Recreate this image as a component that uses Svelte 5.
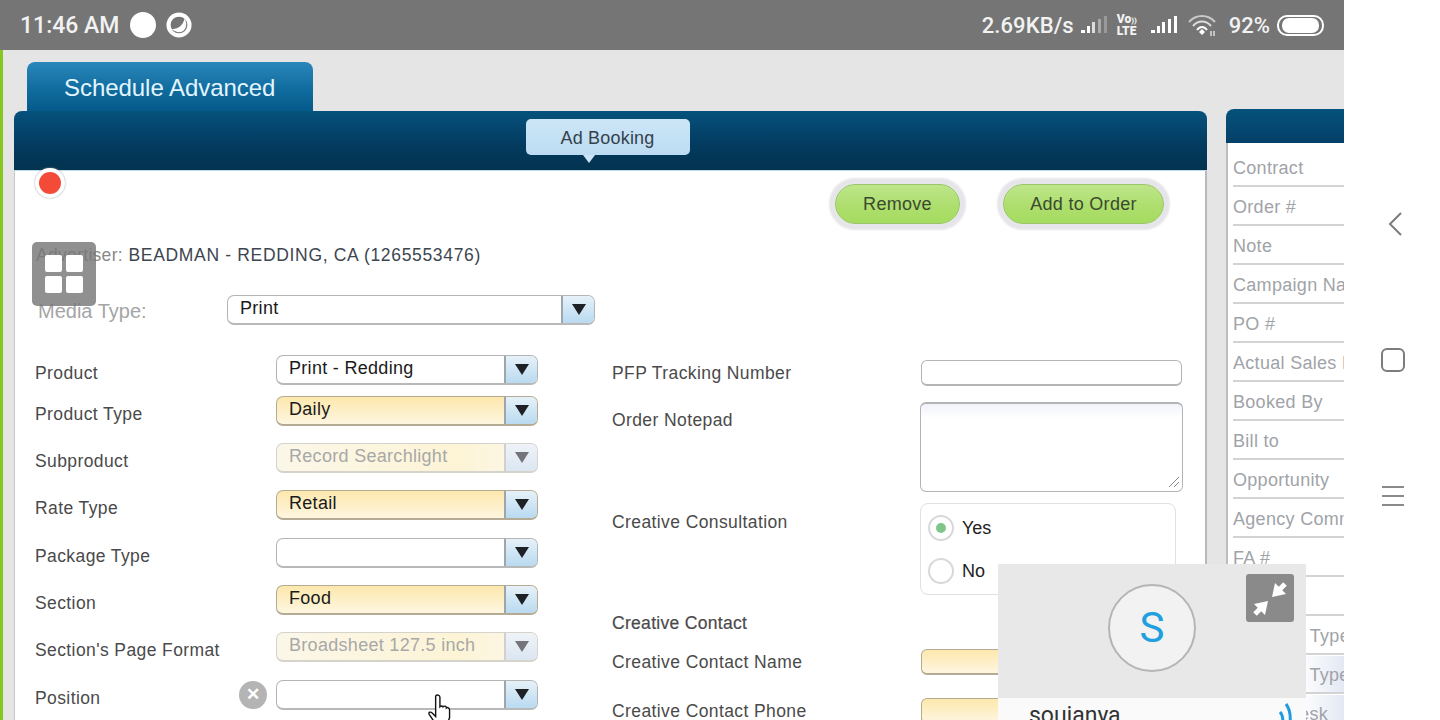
<script lang="ts">
    const products = [
        { label: "Product", value: "Print - Redding", kind: "plain", gap: 11 },
        { label: "Product Type", value: "Daily", kind: "req", gap: 17 },
        { label: "Subproduct", value: "Record Searchlight", kind: "off", gap: 17 },
        { label: "Rate Type", value: "Retail", kind: "req", gap: 18 },
        { label: "Package Type", value: "", kind: "plain", gap: 17 },
        { label: "Section", value: "Food", kind: "req", gap: 17 },
        { label: "Section's Page Format", value: "Broadsheet 127.5 inch", kind: "off", gap: 18 },
        { label: "Position", value: "", kind: "plain", gap: 0, clear: true }
    ];

    const summary = ["Contract", "Order #", "Note", "Campaign Name", "PO #", "Actual Sales Rep", "Booked By", "Bill to", "Opportunity", "Agency Commission", "FA #", "", "Insertion Type", "Override Type", "Order Desk"];
</script>

<div class="device">
    <div class="screen">
        <div class="status">
            <div class="status-left">
                <span>11:46 AM</span>
                <i class="dot"></i>
                <svg width="26" height="26" viewBox="0 0 28 28">
                    <circle cx="14" cy="14" r="13.500" fill="#fff" />
                    <circle cx="14" cy="14" r="9" fill="#757575" />
                    <path d="M6 18c5 1 12-2 14-11 3 5 2 10-1 13-3 3-9 2-13-2z" fill="#fff" />
                </svg>
            </div>
            <div class="status-right">
                <span class="speed">2.69KB/s</span>
                <svg width="28" height="20" viewBox="0 0 28 20" class="bars">
                    <rect x="1" y="15" width="4" height="3" fill="#fff" /><rect x="7" y="11" width="3" height="7" fill="#fff" /><rect x="12" y="7" width="3" height="11" fill="#ddd" /><rect x="18" y="4" width="3" height="14" fill="#aaa" /><rect x="24" y="1" width="3" height="17" fill="#999" />
                </svg>
                <div class="volte"><b>Vo<small>))</small></b><b>LTE</b></div>
                <svg width="28" height="20" viewBox="0 0 28 20" class="bars">
                    <rect x="1" y="15" width="4" height="3" fill="#fff" /><rect x="7" y="11" width="3" height="7" fill="#fff" /><rect x="12" y="7" width="3" height="11" fill="#fff" /><rect x="18" y="4" width="3" height="14" fill="#fff" /><rect x="24" y="1" width="3" height="17" fill="#fff" />
                </svg>
                <svg width="30" height="24" viewBox="0 0 30 24" class="wifi">
                    <path d="M2 9C9 1 21 1 28 9" fill="none" stroke="#c8c8c8" stroke-width="2" />
                    <path d="M6 13C11 7 19 7 24 13" fill="none" stroke="#ddd" stroke-width="2" />
                    <path d="M10 17C13 13 17 13 20 17" fill="none" stroke="#fff" stroke-width="2" />
                    <path d="M12 19l3-3 3 3-3 3z" fill="#fff" />
                    <path d="M24 18v5M27 18v5" stroke="#ddd" stroke-width="1.500" />
                </svg>
                <span>92%</span>
                <div class="battery"><i></i></div>
            </div>
        </div>

        <div class="page">
            <div class="tab">Schedule Advanced</div>
            <div class="columns">
                <section class="panel">
                    <header class="panel-head">
                        <div class="pill">Ad Booking</div>
                    </header>
                    <div class="panel-body">
                        <div class="actions">
                            <button class="green remove">Remove</button>
                            <button class="green add">Add to Order</button>
                        </div>
                        <p class="advertiser"><span>Advertiser:</span> BEADMAN - REDDING, CA (1265553476)</p>
                        <div class="media">
                            <span class="media-label">Media Type:</span>
                            <div class="select media-select">
                                <span class="val">Print</span>
                                <span class="arrow"><i></i></span>
                            </div>
                        </div>
                        <div class="form">
                            <div class="left">
                                {#each products as p}
                                    <div class="row" style="margin-bottom:{p.gap}px">
                                        <span class="lbl">{p.label}</span>
                                        {#if p.clear}
                                            <span class="clear">✕</span>
                                        {/if}
                                        <div class="select {p.kind}">
                                            <span class="val">{p.value}</span>
                                            <span class="arrow"><i></i></span>
                                        </div>
                                    </div>
                                {/each}
                            </div>
                            <div class="right">
                                <div class="rrow first">
                                    <span class="lbl">PFP Tracking Number</span>
                                    <div class="input"></div>
                                </div>
                                <div class="rrow notes">
                                    <span class="lbl">Order Notepad</span>
                                    <div class="textarea">
                                        <svg width="12" height="12" viewBox="0 0 12 12">
                                            <path d="M11 1L1 11M11 6L6 11" stroke="#888" fill="none" />
                                        </svg>
                                    </div>
                                </div>
                                <div class="rrow radios">
                                    <span class="lbl">Creative Consultation</span>
                                    <div class="radio-box">
                                        <div class="radio-line"><i class="radio on"></i>Yes</div>
                                        <div class="radio-line"><i class="radio"></i>No</div>
                                    </div>
                                </div>
                                <div class="contact-title">Creative Contact</div>
                                <div class="rrow contact">
                                    <span class="lbl">Creative Contact Name</span>
                                    <div class="input req"></div>
                                </div>
                                <div class="rrow contact">
                                    <span class="lbl">Creative Contact Phone</span>
                                    <div class="input req"></div>
                                </div>
                            </div>
                        </div>
                    </div>
                </section>
                <aside class="side">
                    <div class="side-head"></div>
                    <ul>
                        {#each summary as s}
                            <li>{s}</li>
                        {/each}
                    </ul>
                </aside>
            </div>

            <i class="rec"></i>
            <div class="float-grid"><i></i><i></i><i></i><i></i></div>
            <svg class="hand" width="28" height="30" viewBox="0 0 26 28">
                <path d="M8 2c1-1.500 4-1.500 4 1v9c1-1 3-1 3 0 1-1 3-1 3 1 1-1 3 0 3 2v7l-2 6H8l-6-9c-1-2 1-3 3-1l3 3V3z" fill="#fff" stroke="#111" stroke-width="1.300" />
            </svg>
            <div class="call">
                <div class="call-top">
                    <div class="avatar">S</div>
                    <div class="shrink">
                        <svg width="48" height="48" viewBox="0 0 48 48">
                            <path d="M26 23l3-14 11 11z" fill="#fff" />
                            <path d="M33 16l6-6" stroke="#fff" stroke-width="5" />
                            <path d="M22 27L8 30l11 11z" fill="#fff" />
                            <path d="M15 34l-6 6" stroke="#fff" stroke-width="5" />
                        </svg>
                    </div>
                </div>
                <div class="call-bottom">
                    <span>soujanya</span>
                    <svg width="16" height="20" viewBox="0 0 16 20">
                        <path d="M2 9c2 2 3 5 3 11M8 1c3 4 5 10 4 19" fill="none" stroke="#1f9ce0" stroke-width="3" />
                    </svg>
                </div>
            </div>
        </div>
    </div>
    <nav class="softkeys">
        <svg class="back" width="14" height="24" viewBox="0 0 14 24">
            <path d="M13 1L2 12l11 11" fill="none" stroke="#7d7d7d" stroke-width="2" />
        </svg>
        <i class="square"></i>
        <div class="menu"><i></i><i></i><i></i></div>
    </nav>
</div>

<style>
    :global(body) {
        margin: 0;
        background: #fff;
    }

    .device {
        display: flex;
        width: 1440px;
        height: 720px;
        overflow: hidden;
        font-family: "Liberation Sans", Arial, sans-serif;
        font-size: 17px;
        color: #333;
    }

    .screen {
        width: 1344px;
        height: 720px;
        display: flex;
        flex-direction: column;
        flex: none;
    }

    .status {
        height: 50px;
        flex: none;
        background: #757575;
        color: #f2f2f2;
        display: flex;
        justify-content: space-between;
        align-items: center;
        padding: 0 20px;
        box-sizing: border-box;
        font-family: Roboto, sans-serif;
        font-size: 22px;
        font-weight: 500;
    }

    .status-left, .status-right {
        display: flex;
        align-items: center;
    }

    .status-left span {
        font-size: 23px;
        margin-right: 11px;
        padding-top: 1px;
    }

    .dot {
        width: 26px;
        height: 26px;
        border-radius: 50%;
        background: #fff;
        margin-right: 10px;
    }

    .speed {
        margin-right: 6px;
        letter-spacing: 0.1px;
    }

    .bars {
        margin-right: 9px;
    }

    .volte {
        display: flex;
        flex-direction: column;
        font-size: 12px;
        line-height: 11px;
        width: 24px;
        margin-right: 9px;
        font-weight: 700;
    }

    .volte small {
        font-size: 8px;
    }

    .wifi {
        margin-right: 12px;
    }

    .battery {
        width: 47px;
        height: 21px;
        border: 2px solid #fff;
        border-radius: 10px;
        margin-left: 7px;
        padding: 1px;
        box-sizing: border-box;
    }

    .battery i {
        display: block;
        height: 100%;
        background: #fff;
        border-radius: 7px;
        width: 92%;
        margin: 0 auto;
    }

    .page {
        position: relative;
        flex: 1;
        min-height: 0;
        overflow: hidden;
        background: #e6e5e6;
        border-left: 3px solid #86c820;
        padding: 12px 0 0 11px;
        box-sizing: border-box;
    }

    .tab {
        margin-left: 13px;
        width: 286px;
        height: 49px;
        box-sizing: border-box;
        padding: 12px 0 0 37px;
        border-radius: 8px 8px 0 0;
        background: linear-gradient(180deg, #2a87bb 0%, #0f6a9c 60%, #045a8a 100%);
        color: #e2f5ff;
        font-size: 24px;
        letter-spacing: -0.05px;
        line-height: 28px;
    }

    .columns {
        display: flex;
        gap: 19px;
        align-items: flex-start;
    }

    .panel {
        width: 1193px;
        flex: none;
        background: #fff;
        border-right: 2px solid #b9b9bb;
        border-left: 1px solid #c8c8c8;
        box-sizing: border-box;
        border-radius: 8px 8px 0 0;
    }

    .panel-head {
        height: 59px;
        margin: 0 -2px 0 -1px;
        border-radius: 8px 8px 0 0;
        background: linear-gradient(180deg, #05527d 0%, #033a5e 60%, #03334f 100%);
        display: flex;
        justify-content: center;
        border-bottom: 1px solid #bcdcee;
    }

    .pill {
        margin-top: 8px;
        width: 164px;
        height: 36px;
        border-radius: 5px;
        background: linear-gradient(180deg, #cde6f7, #bcdcf3);
        color: #34424c;
        font-size: 18px;
        letter-spacing: 0.2px;
        line-height: 39px;
        text-align: center;
        position: relative;
        left: -3px;
    }

    .pill::after {
        content: "";
        position: absolute;
        left: 57px;
        bottom: -8px;
        border: 6px solid transparent;
        border-bottom-width: 0;
        border-top: 8px solid #cbe4f6;
    }

    .panel-body {
        padding: 6px 0 0 20px;
    }

    .actions {
        display: flex;
        justify-content: flex-end;
        gap: 43px;
        padding-right: 41px;
        height: 54px;
        align-items: center;
    }

    .green {
        height: 40px;
        border-radius: 20px;
        border: 1px solid #9cc46c;
        background: linear-gradient(180deg, #bde68a 0%, #aede6e 55%, #a5dc60 100%);
        box-shadow: 0 0 2px 6px #e6e6ea;
        color: #3a4a2e;
        font: 18px "Liberation Sans", Arial, sans-serif;
        letter-spacing: 0.3px;
        padding: 0;
    }

    .remove {
        width: 125px;
    }

    .add {
        width: 161px;
    }

    .advertiser {
        margin: 14px 0 0 1px;
        line-height: 20px;
        font-size: 17.500px;
        color: #3d4650;
        letter-spacing: 0.67px;
    }

    .advertiser span {
        color: #8a8a8a;
        letter-spacing: 0.3px;
    }

    .media {
        display: flex;
        align-items: center;
        margin-top: 30px;
    }

    .media-label {
        width: 192px;
        padding-left: 3px;
        box-sizing: border-box;
        color: #a5a5a5;
        font-size: 20px;
        padding-top: 2px;
    }

    .select {
        height: 30px;
        width: 262px;
        box-sizing: border-box;
        border: 1px solid #b4b4b4;
        border-bottom: 2px solid #b8b8b8;
        border-radius: 7px;
        background: #fff;
        display: flex;
        justify-content: space-between;
        overflow: hidden;
        flex: none;
    }

    .media-select {
        width: 368px;
    }

    .select .val {
        padding-left: 12px;
        color: #1a1a1a;
        font-size: 18px;
        letter-spacing: 0.3px;
        line-height: 24px;
    }

    .arrow {
        width: 31px;
        border-left: 2px solid #9ca6ac;
        background: linear-gradient(180deg, #e6f1f9, #b9daf0);
        display: flex;
        align-items: center;
        justify-content: center;
    }

    .arrow i {
        border: 6px solid transparent;
        border-bottom-width: 0;
        border-top: 11px solid #1d2125;
        border-left-width: 7px;
        border-right-width: 7px;
    }

    .select.req, .input.req {
        background: linear-gradient(180deg, #fde8ad 0%, #fdf0cb 60%, #fef6e0 100%);
        border-color: #b5ab95;
    }

    .select.off {
        background: linear-gradient(90deg, #fbf7e8, #fdf4d6 70%, #fbf8ec);
        border-color: #d6d3cc;
    }

    .select.off .val {
        color: #a8a8a8;
    }

    .select.off .arrow {
        border-left-color: #d0d0d0;
        background: linear-gradient(180deg, #eff3f8, #dbe6f2);
    }

    .select.off .arrow i {
        border-top-color: #74747c;
    }

    .form {
        display: flex;
        margin-top: 30px;
    }

    .left {
        width: 577px;
        flex: none;
    }

    .row {
        display: flex;
        align-items: center;
        height: 30px;
        position: relative;
    }

    .lbl {
        color: #4a4a4a;
        font-size: 17.500px;
        letter-spacing: 0.4px;
        padding-top: 6px;
        white-space: nowrap;
    }

    .row .lbl {
        width: 241px;
        flex: none;
    }

    .clear {
        position: absolute;
        left: 204px;
        top: 1px;
        width: 28px;
        height: 28px;
        border-radius: 50%;
        background: #b4b4b4;
        color: #fff;
        font-size: 17px;
        font-weight: 700;
        line-height: 28px;
        text-align: center;
    }

    .rrow {
        display: flex;
    }

    .rrow .lbl {
        width: 309px;
        flex: none;
    }

    .first {
        align-items: center;
        height: 30px;
    }

    .first .input {
        margin-top: 6px;
    }

    .input {
        width: 261px;
        height: 26px;
        box-sizing: border-box;
        border: 1px solid #b4b4b4;
        border-bottom-width: 2px;
        border-radius: 6px;
        background: #fff;
    }

    .notes {
        margin-top: 17px;
    }

    .notes .lbl {
        padding-top: 8px;
        width: 308px;
    }

    .textarea {
        width: 263px;
        height: 90px;
        box-sizing: border-box;
        border: 1px solid #b4b4b4;
        border-top-width: 2px;
        border-radius: 6px;
        background: linear-gradient(180deg, #f1f3fa 0, #fff 14px);
        display: flex;
        justify-content: flex-end;
        align-items: flex-end;
        padding: 0 2px 3px 0;
    }

    .radios {
        margin-top: 11px;
    }

    .radios .lbl {
        padding-top: 0;
        margin-top: 9px;
        width: 308px;
    }

    .radio-box {
        width: 256px;
        height: 92px;
        box-sizing: border-box;
        border: 1px solid #e2e0e2;
        border-radius: 8px;
        padding: 10px 0 0 7px;
    }

    .radio-line {
        display: flex;
        align-items: center;
        gap: 8px;
        height: 28px;
        margin-bottom: 15px;
        font-size: 18px;
        color: #222;
    }

    .radio {
        width: 26px;
        height: 26px;
        border: 2px solid #d8d8d8;
        border-radius: 50%;
        box-sizing: border-box;
        display: flex;
        align-items: center;
        justify-content: center;
    }

    .radio.on::after {
        content: "";
        width: 10px;
        height: 10px;
        border-radius: 50%;
        background: #7fc58a;
    }

    .contact-title {
        margin-top: 17px;
        font-size: 17.500px;
        -webkit-text-stroke: 0.2px #4a4a4a;
        color: #4a4a4a;
        letter-spacing: 0.3px;
        line-height: 22px;
    }

    .contact {
        margin-top: 15px;
        align-items: center;
        height: 26px;
    }

    .contact + .contact {
        margin-top: 23px;
    }

    .contact .lbl {
        padding-top: 0;
    }

    .side {
        flex: 1;
        min-width: 0;
        margin-top: -2px;
        border-radius: 8px 0 0 0;
        overflow: hidden;
    }

    .side-head {
        height: 34px;
        background: linear-gradient(180deg, #05527d, #043f66);
    }

    .side ul {
        list-style: none;
        margin: 0;
        padding: 6px 0 0 5px;
        background: #fff;
        border-left: 2px solid #bcbcbe;
    }

    .side li {
        height: 38px;
        margin-bottom: 1px;
        box-sizing: border-box;
        border-bottom: 2px solid #d3d3d5;
        color: #a0a3a8;
        font-size: 18px;
        letter-spacing: 0.3px;
        line-height: 38px;
        white-space: nowrap;
        overflow: hidden;
    }

    .side li:nth-last-child(-n+2) {
        background: linear-gradient(90deg, #fff 60%, #e3e8f3);
    }

    /* things floating over the page */
    .rec {
        position: absolute;
        left: 32px;
        top: 118px;
        width: 22px;
        height: 22px;
        border-radius: 50%;
        background: #f44b38;
        border: 4px solid #fff;
        box-shadow: 0 0 2px #999;
    }

    .float-grid {
        position: absolute;
        left: 29px;
        top: 192px;
        width: 64px;
        height: 64px;
        box-sizing: border-box;
        padding: 13px;
        display: grid;
        grid-template-columns: 17px 17px;
        grid-auto-rows: 17px;
        gap: 4px;
        background: rgba(120, 120, 120, 0.82);
        border-radius: 5px;
    }

    .float-grid i {
        background: #fff;
        border-radius: 2px;
    }

    .hand {
        position: absolute;
        left: 424px;
        top: 644px;
    }

    .call {
        position: absolute;
        left: 995px;
        top: 514px;
        width: 308px;
        height: 156px;
        background: #fafafa;
    }

    .call-top {
        height: 134px;
        background: #e8e8e8;
        position: relative;
        display: flex;
        justify-content: center;
        align-items: flex-start;
    }

    .avatar {
        margin-top: 20px;
        width: 88px;
        height: 88px;
        box-sizing: border-box;
        border: 2px solid #b5b5b5;
        border-radius: 50%;
        background: #f2f2f2;
        color: #21a0e0;
        font: 42px/84px Roboto, sans-serif;
        text-align: center;
    }

    .shrink {
        position: absolute;
        top: 10px;
        right: 12px;
        width: 48px;
        height: 48px;
        background: #8a8a8a;
        border-radius: 3px;
    }

    .shrink svg {
        display: block;
    }

    .call-bottom {
        height: 22px;
        display: flex;
        justify-content: space-between;
        padding: 0 12px 0 31px;
        font: 23px/36px Roboto, sans-serif;
        color: #333;
        overflow: hidden;
    }

    .call-bottom svg {
        margin-top: 5px;
        flex: none;
    }

    .softkeys {
        flex: 1;
        background: #fff;
        display: flex;
        flex-direction: column;
        align-items: center;
    }

    .back {
        margin: 212px 0 0 6px;
    }

    .square {
        margin: 112px 0 0 2px;
        width: 24px;
        height: 24px;
        box-sizing: border-box;
        border: 2px solid #7d7d7d;
        border-radius: 6px;
    }

    .menu {
        margin: 114px 0 0 2px;
        width: 22px;
        display: flex;
        flex-direction: column;
        gap: 7px;
    }

    .menu i {
        height: 2px;
        background: #8a8a8a;
    }
</style>
